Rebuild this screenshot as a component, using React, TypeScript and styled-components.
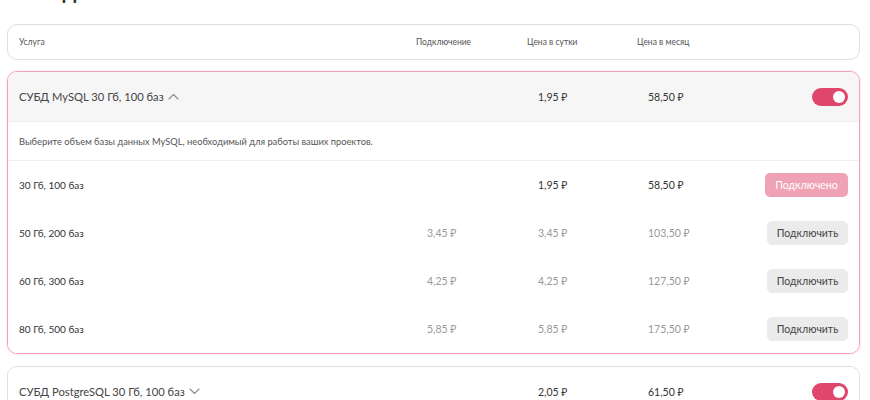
import React from "react";
import styled, { createGlobalStyle } from "styled-components";

const GlobalStyle = createGlobalStyle`
  html, body { margin: 0; padding: 0; background: #fff; }
  body { font-family: Lato, "Noto Sans", sans-serif; color: #333; }
`;

const Page = styled.div`
  padding: 0 10px 0 7px;
  display: flex;
  flex-direction: column;
`;

const Title = styled.h1`
  margin: -22px 0 0 -1px;
  font-size: 22px;
  line-height: 26px;
  font-weight: 700;
  color: #333;
`;

const HeadCard = styled.div`
  margin-top: 20px;
  height: 34px;
  border: 1px solid #dedede;
  border-radius: 10px;
  display: grid;
  grid-template-columns: 397px 111px 110px 1fr;
  align-items: center;
  padding-left: 11px;
  font-size: 8.5px;
  color: #555;
`;

const Card = styled.div<{ $open?: boolean }>`
  margin-top: ${(p) => (p.$open ? "11px" : "12px")};
  border: 1px solid ${(p) => (p.$open ? "#f2a3b8" : "#dedede")};
  border-radius: 10px;
  overflow: hidden;
  box-shadow: ${(p) => (p.$open ? "0 0 2px rgba(232, 90, 130, 0.35)" : "none")};
`;

const Row = styled.div<{ $h: number; $bg?: string; $line?: boolean }>`
  height: ${(p) => p.$h}px;
  background: ${(p) => p.$bg || "#fff"};
  border-top: ${(p) => (p.$line ? "1px solid #efefef" : "none")};
  display: grid;
  grid-template-columns: 408px 111px 110px 1fr auto;
  align-items: center;
  padding: 0 11px;
`;

const Name = styled.div`
  display: flex;
  align-items: center;
  gap: 4px;
  font-size: 11.2px;
  color: #444;
`;

const Desc = styled.div`
  grid-column: 1 / -1;
  font-size: 9.3px;
  color: #555;
`;

const Cell = styled.div<{ $muted?: boolean; $size?: number }>`
  font-size: ${(p) => p.$size || 10.5}px;
  color: ${(p) => (p.$muted ? "#999" : "#333")};
`;

const Label = styled.div`
  font-size: 10px;
  color: #333;
`;

const End = styled.div`
  display: flex;
  justify-content: flex-end;
`;

const Toggle = styled.div`
  width: 36px;
  height: 18px;
  border-radius: 9px;
  background: #e0456c;
  display: flex;
  align-items: center;
  justify-content: flex-end;
  padding-right: 3px;
  box-sizing: border-box;
`;

const Knob = styled.div`
  width: 12px;
  height: 12px;
  border-radius: 50%;
  background: #fff;
`;

const Btn = styled.button<{ $active?: boolean }>`
  width: ${(p) => (p.$active ? 83 : 81)}px;
  height: 24px;
  border: none;
  border-radius: 5px;
  font-family: inherit;
  font-size: 10.5px;
  background: ${(p) => (p.$active ? "#f0a2b5" : "#ebebeb")};
  color: ${(p) => (p.$active ? "#fff" : "#444")};
  padding: 0;
`;

const Chevron = ({ up }: { up?: boolean }) => (
  <svg width="11" height="7" viewBox="0 0 11 7" fill="none">
    <path
      d={up ? "M1 6L5.5 1.5L10 6" : "M1 1L5.5 5.5L10 1"}
      stroke="#8a8a8a"
      strokeWidth="1.1"
      strokeLinecap="round"
      strokeLinejoin="round"
    />
  </svg>
);

const options = [
  { name: "30 Гб, 100 баз", conn: "", day: "1,95 ₽", month: "58,50 ₽", active: true },
  { name: "50 Гб, 200 баз", conn: "3,45 ₽", day: "3,45 ₽", month: "103,50 ₽" },
  { name: "60 Гб, 300 баз", conn: "4,25 ₽", day: "4,25 ₽", month: "127,50 ₽" },
  { name: "80 Гб, 500 баз", conn: "5,85 ₽", day: "5,85 ₽", month: "175,50 ₽" },
];

export default function App() {
  return (
    <Page>
      <GlobalStyle />
      <Title>Базы данных</Title>
      <HeadCard>
        <div>Услуга</div>
        <div>Подключение</div>
        <div>Цена в сутки</div>
        <div>Цена в месяц</div>
      </HeadCard>

      <Card $open>
        <Row $h={49} $bg="#f6f6f6">
          <Name>
            СУБД MySQL 30 Гб, 100 баз <Chevron up />
          </Name>
          <div />
          <Cell>1,95 ₽</Cell>
          <Cell>58,50 ₽</Cell>
          <End>
            <Toggle>
              <Knob />
            </Toggle>
          </End>
        </Row>
        <Row $h={38} $line>
          <Desc>Выберите объем базы данных MySQL, необходимый для работы ваших проектов.</Desc>
        </Row>
        {options.map((o, i) => (
          <Row key={o.name} $h={48} $line={i === 0}>
            <Label>{o.name}</Label>
            <Cell $muted>{o.conn}</Cell>
            <Cell $muted={!o.active}>{o.day}</Cell>
            <Cell $muted={!o.active}>{o.month}</Cell>
            <End>
              <Btn $active={o.active}>{o.active ? "Подключено" : "Подключить"}</Btn>
            </End>
          </Row>
        ))}
      </Card>

      <Card>
        <Row $h={49}>
          <Name>
            СУБД PostgreSQL 30 Гб, 100 баз <Chevron />
          </Name>
          <div />
          <Cell>2,05 ₽</Cell>
          <Cell>61,50 ₽</Cell>
          <End>
            <Toggle>
              <Knob />
            </Toggle>
          </End>
        </Row>
      </Card>
    </Page>
  );
}
